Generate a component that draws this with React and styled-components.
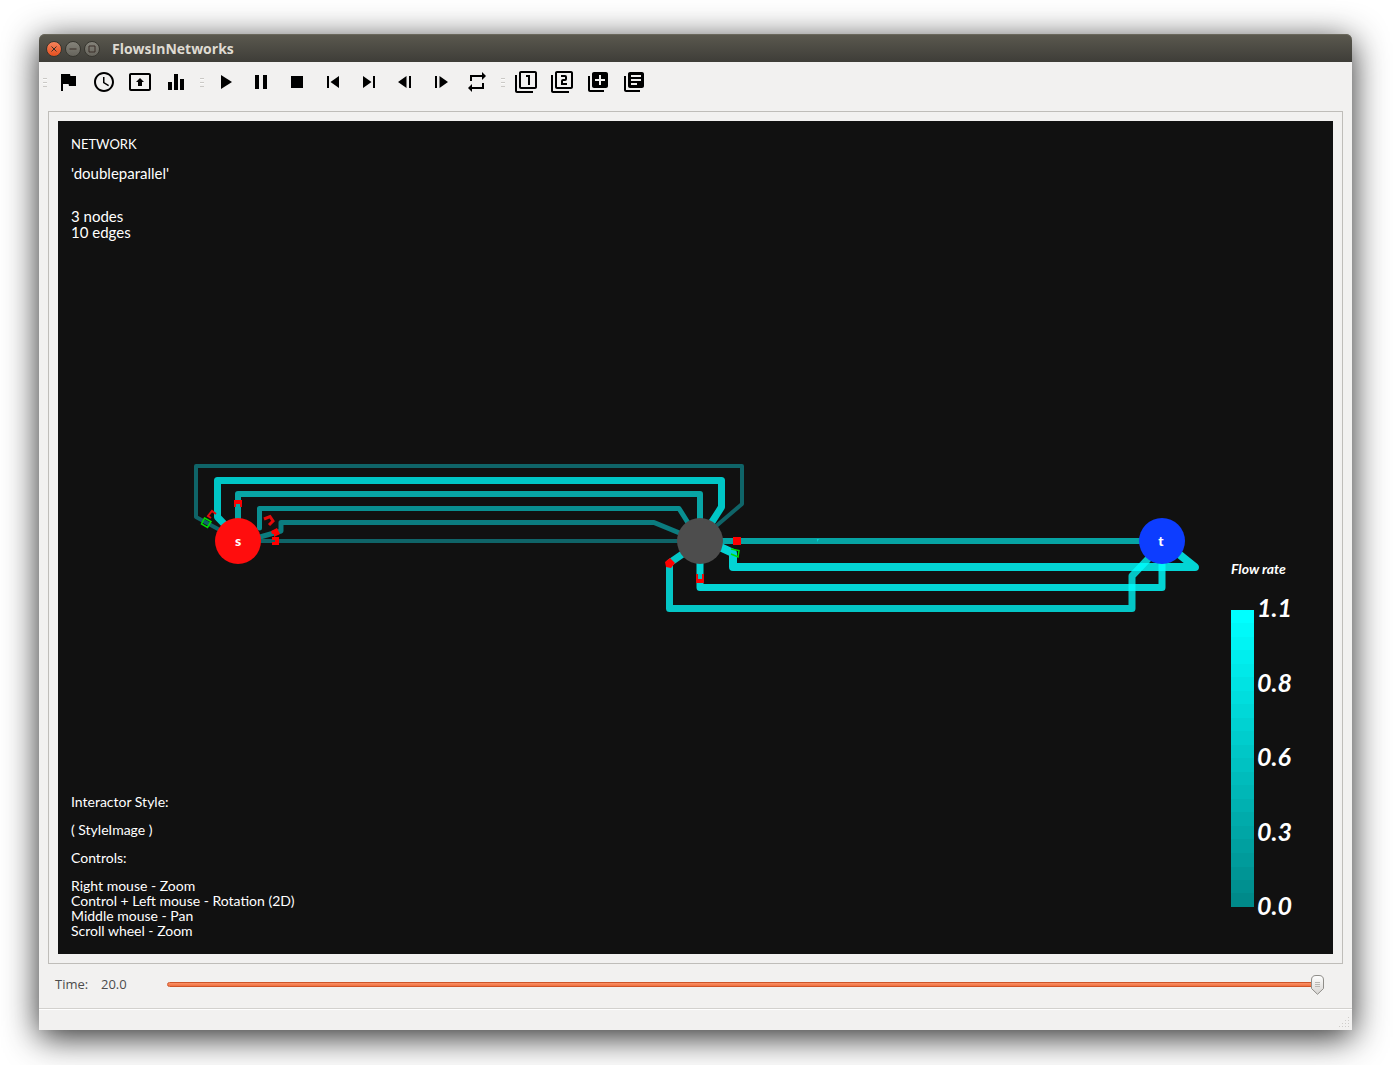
import React, { useState } from "react";
import styled, { createGlobalStyle, css } from "styled-components";
import {
  MdFlag, MdAccessTime, MdPresentToAll, MdEqualizer, MdPlayArrow, MdPause, MdStop,
  MdSkipPrevious, MdSkipNext, MdRepeat, MdFilter1, MdFilter2, MdLibraryAdd, MdLibraryBooks,
} from "react-icons/md";

const GlobalStyle = createGlobalStyle`
  *, *::before, *::after { box-sizing: border-box; }
  body { margin: 0; background: #fff; }
`;

const Desktop = styled.div`
  display: flex;
  min-height: 100vh;
  padding: 34px 47px 35px 39px;
  overflow: hidden;
  font-family: "Open Sans", "Noto Sans", sans-serif;
`;

const Window = styled.main`
  flex: 1;
  display: flex;
  flex-direction: column;
  min-width: 0;
  background: #f2f1f0;
  border-radius: 6px 6px 0 0;
  box-shadow: 0 7px 34px rgba(0, 0, 0, 0.85);
`;

const TitleBar = styled.header`
  display: flex;
  align-items: center;
  height: 28px;
  padding: 2px 0 0 7px;
  gap: 12px;
  border-radius: 6px 6px 0 0;
  background: linear-gradient(#5b594f, #3e3d38);
  box-shadow: inset 0 1px #6a685c;
`;

const WindowButtons = styled.div`
  display: flex;
  gap: 3px;
`;

const WindowButton = styled.button`
  width: 16px;
  height: 16px;
  padding: 0;
  border: 1px solid #37362f;
  border-radius: 50%;
  background: ${(p) => (p.$close ? "linear-gradient(#f5835c, #e5501f)" : "linear-gradient(#85837a, #66645c)")};
  svg { display: block; }
`;

const Title = styled.h1`
  margin: 0;
  font-size: 14px;
  line-height: 20px;
  font-weight: 700;
  color: #dfdbd2;
`;

const Toolbar = styled.div`
  display: flex;
  height: 40px;
  padding-left: 4px;
  gap: 6px;
`;

const ToolGroup = styled.div`
  display: flex;
  align-items: center;
`;

const Grip = styled.span`
  width: 4px;
  height: 9px;
  margin-right: 3px;
  background: repeating-linear-gradient(#cbc9c6 0 1px, #fbfbfa 1px 2px, transparent 2px 4px);
`;

const ToolButton = styled.button`
  display: grid;
  place-items: center;
  width: 36px;
  height: 36px;
  padding: 0;
  border: 0;
  background: none;
  color: #000;
  svg { width: 24px; height: 24px; fill: currentColor; }
`;

const Frame = styled.section`
  flex: 1;
  display: grid;
  margin: 9px 9px 0;
  padding: 9px;
  border: 1px solid #bfbdb9;
`;

const Viewport = styled.div`
  display: grid;
  grid-template: minmax(0, 1fr) / minmax(0, 1fr);
  background: #111;
  color: #fff;
  font-family: Lato, sans-serif;
  > * { grid-area: 1 / 1; }
`;

const Network = styled.svg`
  width: 100%;
  height: 100%;
  contain: size;
`;

const Notes = styled.div`
  display: flex;
  flex-direction: column;
  gap: 13px;
  margin: 16px 13px;
  font-size: 14px;
  line-height: 15px;
  ${(p) => p.$bottom && css`align-self: end;`}
  p { margin: 0; }
`;

const Heading = styled.p`
  font-size: 13px;
`;

const Summary = styled.p`
  font-size: 15px;
  line-height: 16px;
`;

const Counts = styled(Summary)`
  padding-top: 14px;
`;

const Legend = styled.aside`
  place-self: end;
  margin: 0 41px 35px 0;
  font-style: italic;
  font-weight: 700;
`;

const LegendTitle = styled.h2`
  margin: 0 0 17px;
  font-size: 14px;
  line-height: 16px;
`;

const Scale = styled.div`
  display: flex;
  gap: 3px;
`;

const bands = Array.from({ length: 22 }, (_, i) => {
  const v = Math.round(255 - (i * 117) / 21);
  return `rgb(0,${v},${v}) ${(i * 100) / 22}% ${((i + 1) * 100) / 22}%`;
}).join(", ");

const ColorBar = styled.div`
  width: 23px;
  margin: 16px 0 12px;
  background: linear-gradient(${bands});
`;

const Ticks = styled.ol`
  display: flex;
  flex-direction: column;
  justify-content: space-between;
  height: 325px;
  margin: 0;
  padding: 0 0 1px;
  list-style: none;
  font-size: 25px;
  line-height: 26px;
`;

const TimeRow = styled.div`
  display: flex;
  align-items: center;
  height: 44px;
  padding: 0 28px 3px 16px;
  font-size: 13px;
  line-height: 18px;
  color: #4c4c4c;
`;

const TimeLabel = styled.label`
  width: 46px;
  padding-bottom: 2px;
`;

const TimeValue = styled.output`
  width: 66px;
  padding-bottom: 2px;
`;

const SliderBox = styled.div`
  position: relative;
  flex: 1;
  height: 20px;
`;

const Slider = styled.input`
  appearance: none;
  display: block;
  width: 100%;
  height: 20px;
  margin: 0;
  background: none;
  &::-webkit-slider-runnable-track {
    height: 5px;
    border: 1px solid #cf5528;
    border-radius: 3px;
    background: linear-gradient(#fb9268, #f0703f);
  }
  &::-webkit-slider-thumb {
    appearance: none;
    width: 13px;
    height: 20px;
    margin-top: -8px;
    opacity: 0;
  }
`;

const Thumb = styled.svg`
  position: absolute;
  top: 0;
  width: 13px;
  height: 20px;
  pointer-events: none;
`;

const StatusBar = styled.footer`
  display: flex;
  justify-content: flex-end;
  align-items: flex-end;
  height: 22px;
  padding: 0 2px 1px;
  border-top: 1px solid #d3d1ce;
  box-shadow: inset 0 1px #fff;
`;

const StepBack = () => (
  <svg viewBox="0 0 24 24"><path d="M5 12l8.500-6v12zM16 6h2v12h-2z" /></svg>
);
const StepForward = () => (
  <svg viewBox="0 0 24 24"><path d="M6 6h2v12H6zM10.500 6l8.500 6-8.500 6z" /></svg>
);

const groups = [
  [["Flag", MdFlag], ["Clock", MdAccessTime], ["Present", MdPresentToAll], ["Chart", MdEqualizer]],
  [["Play", MdPlayArrow], ["Pause", MdPause], ["Stop", MdStop], ["First", MdSkipPrevious], ["Last", MdSkipNext],
    ["Step back", StepBack], ["Step forward", StepForward], ["Repeat", MdRepeat]],
  [["View 1", MdFilter1], ["View 2", MdFilter2], ["Add", MdLibraryAdd], ["Log", MdLibraryBooks]],
];

const edges = [
  ["M218 529L196 517V466H742V504L715 527", 4, "#0f6468", 1],
  ["M228 528L217.500 517V480.500H721.500V507L710 525", 7, "#00c6c6", 1],
  ["M238 520V494H700V520", 6, "#08a6a6", 1],
  ["M259.500 528V508.500H679L690 526", 5, "#098f91", 1],
  ["M260 537L281 531V522.500H654L682 534", 5, "#0b7c7f", 1],
  ["M260 541H680", 4, "#0f6468", 1],
  ["M720 541H1142", 6, "#00ffff", 0.62],
  ["M720 547L733 553V567H1195L1180 555", 8, "#00ffff", 0.82],
  ["M700 562V587.500H1162V562", 7, "#00ffff", 0.82],
  ["M684 553L669.500 563V608.500H1132V576L1148 559", 7, "#00ffff", 0.76],
];

function NetworkGraph() {
  return (
    <Network viewBox="58 121 1275 833" role="img" aria-label="Flow network with three nodes">
      <g fill="none" strokeLinejoin="round" strokeLinecap="round">
        {edges.map(([d, w, c, o]) => (
          <path key={d} d={d} strokeWidth={w} stroke={c} strokeOpacity={o} />
        ))}
      </g>
      <path d="M817 542v-3h2z" fill="#00d6d6" />
      <g fill="none" stroke="#e60a0a" strokeWidth="2">
        <path d="M211 518L208 516L212 511L216 514" />
        <path d="M264 519L270 516.500L273 521L269 525" strokeWidth="3" />
        <path d="M235 507V501H241V507" />
        <path d="M697 574V582H703V574" />
      </g>
      <g fill="#f00">
        <path d="M234 500h8v4h-8zM271 531l6-3 3 6-6 3v-3h-2zM272 537h7v8h-7v-3h3v-2h-3zM733 537h8v8h-8z" />
        <path d="M665 562l5-4 5 5-4 5-5-1zM697 578h6v5h-6z" />
      </g>
      <path d="M698 574h4v5h-4z" fill="#00c6c6" />
      <g fill="none" stroke="#0d0" strokeWidth="1.500">
        <path d="M204.500 518L211 521.500L207.500 527.500L201.500 524Z" />
        <path d="M731 549L739 550.500L738 557L731 554" />
      </g>
      <circle cx="238" cy="541" r="23" fill="#ff0d0d" />
      <circle cx="700" cy="541" r="23" fill="#4d4d4d" />
      <circle cx="1162" cy="541" r="23" fill="#0d3dff" />
      <g fill="#fff" fontSize="14" fontWeight="900" textAnchor="middle">
        <text x="238" y="546">s</text>
        <text x="1161" y="546">t</text>
      </g>
    </Network>
  );
}

export default function App() {
  const [time, setTime] = useState(20);
  const part = time / 20;
  return (
    <Desktop>
      <GlobalStyle />
      <Window>
        <TitleBar>
          <WindowButtons>
            {["M4.500 4.500l5 5M9.500 4.500l-5 5", "M3.500 7h7", "M4 4h6v6h-6z"].map((d, i) => (
              <WindowButton key={d} $close={i === 0} aria-label={["Close", "Minimize", "Maximize"][i]}>
                <svg viewBox="0 0 14 14" width="14" height="14"><path d={d} fill="none" stroke="#3a2f29" /></svg>
              </WindowButton>
            ))}
          </WindowButtons>
          <Title>FlowsInNetworks</Title>
        </TitleBar>
        <Toolbar role="toolbar">
          {groups.map((tools, i) => (
            <ToolGroup key={i}>
              <Grip />
              {tools.map(([name, Icon]) => (
                <ToolButton key={name} aria-label={name}><Icon /></ToolButton>
              ))}
            </ToolGroup>
          ))}
        </Toolbar>
        <Frame>
          <Viewport>
            <NetworkGraph />
            <Notes>
              <Heading>NETWORK</Heading>
              <Summary>'doubleparallel'</Summary>
              <Counts>3 nodes<br />10 edges</Counts>
            </Notes>
            <Notes $bottom>
              <p>Interactor Style:</p>
              <p>( StyleImage )</p>
              <p>Controls:</p>
              <p>
                Right mouse - Zoom<br />
                Control + Left mouse - Rotation (2D)<br />
                Middle mouse - Pan<br />
                Scroll wheel - Zoom
              </p>
            </Notes>
            <Legend>
              <LegendTitle>Flow rate</LegendTitle>
              <Scale>
                <ColorBar />
                <Ticks>
                  {["1.1", "0.8", "0.6", "0.3", "0.0"].map((t) => <li key={t}>{t}</li>)}
                </Ticks>
              </Scale>
            </Legend>
          </Viewport>
        </Frame>
        <TimeRow>
          <TimeLabel htmlFor="time">Time:</TimeLabel>
          <TimeValue htmlFor="time">{time.toFixed(1)}</TimeValue>
          <SliderBox>
            <Slider id="time" type="range" min="0" max="20" step="0.1" value={time}
              onChange={(e) => setTime(Number(e.target.value))} />
            <Thumb viewBox="0 0 13 20" style={{ left: `calc((100% - 13px) * ${part})` }}>
              <defs>
                <linearGradient id="thumb" x1="0" y1="0" x2="0" y2="1">
                  <stop offset="0" stopColor="#fff" /><stop offset="1" stopColor="#d6d4d1" />
                </linearGradient>
              </defs>
              <path d="M.5 5Q.5.5 5 .5H8Q12.500.5 12.500 5V13.500L6.500 19.300L.5 13.500Z" fill="url(#thumb)" stroke="#8f8d89" />
              <path d="M4 7.500h5M4 9.500h5M4 11.500h5" stroke="#b9b7b3" />
            </Thumb>
          </SliderBox>
        </TimeRow>
        <StatusBar>
          <svg width="12" height="12" viewBox="0 0 12 12" fill="#cfcdca">
            <path d="M10 0h1v1h-1zM10 3h1v1h-1zM7 3h1v1H7zM10 6h1v1h-1zM7 6h1v1H7zM4 6h1v1H4zM10 9h1v1h-1zM7 9h1v1H7zM4 9h1v1H4zM1 9h1v1H1z" />
          </svg>
        </StatusBar>
      </Window>
    </Desktop>
  );
}
